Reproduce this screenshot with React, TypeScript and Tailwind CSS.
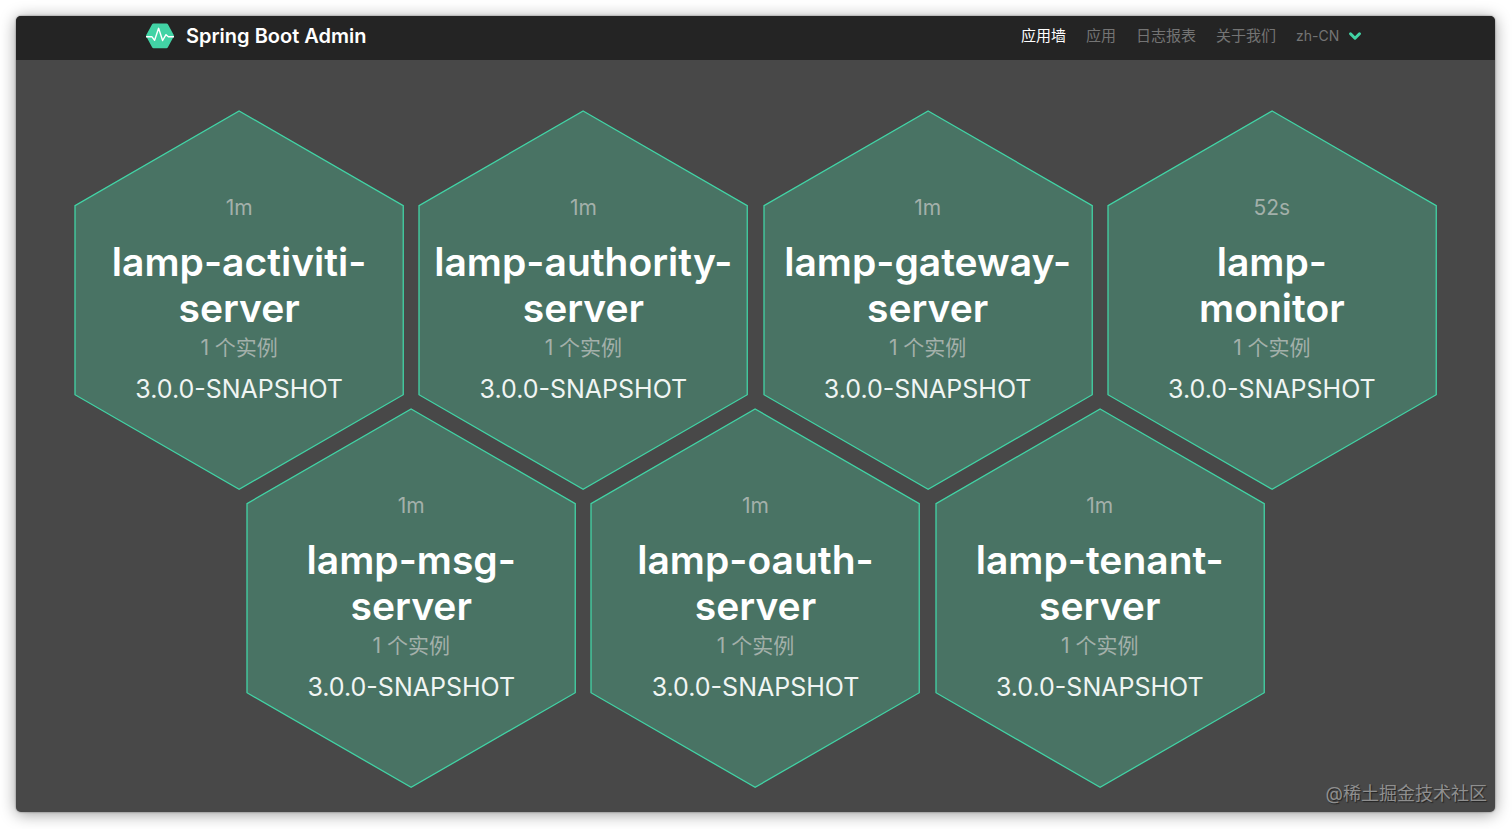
import { ChevronDown } from "lucide-react";

const navLinks = [
  { label: "应用墙", active: true },
  { label: "应用", active: false },
  { label: "日志报表", active: false },
  { label: "关于我们", active: false },
];

const applications = [
  { name: "lamp-activiti-server", uptime: "1m" },
  { name: "lamp-authority-server", uptime: "1m" },
  { name: "lamp-gateway-server", uptime: "1m" },
  { name: "lamp-monitor", uptime: "52s" },
  { name: "lamp-msg-server", uptime: "1m" },
  { name: "lamp-oauth-server", uptime: "1m" },
  { name: "lamp-tenant-server", uptime: "1m" },
];

type Application = (typeof applications)[number];

function Logo() {
  return (
    <svg viewBox="0 0 28 26" className="h-[26px] w-7" aria-hidden="true">
      <path
        d="M7.5 0.5h13q0.9 0 1.4 0.8l5.7 10.5q0.5 1 0 2l-5.7 10.5q-0.5 0.9-1.4 0.9h-13q-0.9 0-1.4-0.9L0.4 13.8q-0.5-1 0-2L6.1 1.3q0.5-0.8 1.4-0.8z"
        fill="#42d3a5"
      />
      <path
        d="M0 13.8h6l2.6 3.5 4-12 4 12.2 3.4-5.8 2.4 2.1H28"
        fill="none"
        stroke="#fff"
        strokeWidth="1.4"
        strokeLinejoin="round"
      />
    </svg>
  );
}

function Navbar() {
  return (
    <header className="flex h-11 items-center justify-between bg-[#242424] pr-[131px] pb-1 pl-[130px]">
      <a href="#" className="flex items-center gap-3">
        <Logo />
        <span className="text-xl leading-6 font-semibold text-white">
          Spring Boot Admin
        </span>
      </a>

      <nav className="flex items-center gap-5 text-[15px] leading-5 text-[#747474]">
        {navLinks.map((link) => (
          <a
            key={link.label}
            href="#"
            className={link.active ? "text-white" : "hover:text-white"}
          >
            {link.label}
          </a>
        ))}
        <div className="grid items-center">
          <select
            aria-label="Language"
            defaultValue="zh-CN"
            className="col-start-1 row-start-1 appearance-none bg-transparent pr-6 text-sm outline-none"
          >
            <option>zh-CN</option>
            <option>en</option>
          </select>
          <ChevronDown
            className="pointer-events-none col-start-1 row-start-1 justify-self-end text-[#42d3a5]"
            size={18}
            strokeWidth={4}
          />
        </div>
      </nav>
    </header>
  );
}

function Hexagon({ app }: { app: Application }) {
  return (
    <a href="#" className="grid text-center">
      <svg
        viewBox="0 0 328 378"
        className="col-start-1 row-start-1 w-full overflow-visible"
        aria-hidden="true"
      >
        <polygon
          points="164,0 328,94.5 328,283.5 164,378 0,283.5 0,94.5"
          fill="#497364"
          stroke="#42d3a5"
          strokeWidth="1.3"
        />
      </svg>

      <div className="col-start-1 row-start-1 flex flex-col items-center justify-center pt-1.5">
        <p className="text-[21px] leading-[30px] text-[#a3b0aa]">
          {app.uptime}
        </p>
        <h2 className="pt-4 text-[39px] leading-[46px] font-semibold text-white">
          {app.name.split("-").map((part, index, parts) => (
            <span key={part}>
              {part}
              {index < parts.length - 1 && "-"}
              {index === parts.length - 2 && <br />}
            </span>
          ))}
        </h2>
        <p className="text-[21px] leading-[34px] text-[#a3b0aa]">1 个实例</p>
        <p className="text-[25px] leading-[48px] text-[#f0f5f3]">
          3.0.0-SNAPSHOT
        </p>
      </div>
    </a>
  );
}

export default function App() {
  return (
    <div className="flex min-h-screen flex-col bg-white pt-4 pr-[17px] pb-[17px] pl-4 font-['Inter','Noto_Sans_CJK_SC',sans-serif]">
      <div className="relative flex flex-1 flex-col overflow-hidden rounded-[5px] bg-[#484848] shadow-[0_0_2px_rgba(0,0,0,0.5),0_2px_16px_rgba(0,0,0,0.4)]">
        <Navbar />

        {/* Wall */}
        <main className="px-[51px] pt-[51px] pb-6">
          <ul className="grid grid-cols-8">
            {applications.map((app, index) => (
              <li
                key={app.name}
                className={
                  index < 4
                    ? "col-span-2 px-2"
                    : index === 4
                      ? "col-span-2 col-start-2 -mt-20 px-2"
                      : "col-span-2 -mt-20 px-2"
                }
              >
                <Hexagon app={app} />
              </li>
            ))}
          </ul>
        </main>

        <p className="absolute right-2 bottom-1 text-lg text-[#8f8f8f] [text-shadow:1px_1px_1px_#222]">
          @稀土掘金技术社区
        </p>
      </div>
    </div>
  );
}
